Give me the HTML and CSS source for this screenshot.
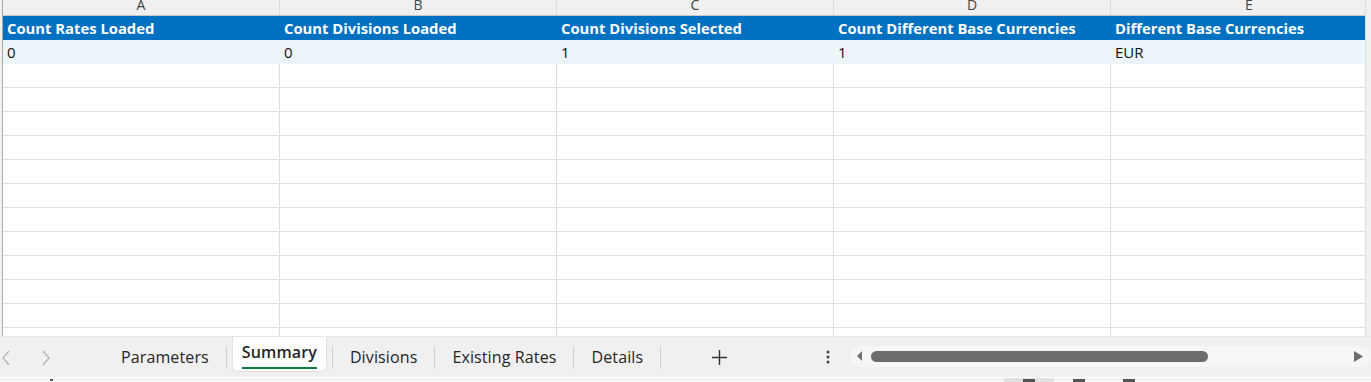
FILE: index.html
```html
<!DOCTYPE html>
<html lang="en">
  <head>
    <meta charset="UTF-8" />
    <title>Summary</title>
    <link rel="stylesheet" href="styles.css">
  </head>
  <body>
    <!-- Sheet area -->
    <div class="sheet">
      <div class="row-head"></div>
      <div class="grid">
        <div class="row letters">
          <div class="cell">A</div>
          <div class="cell">B</div>
          <div class="cell">C</div>
          <div class="cell">D</div>
          <div class="cell">E</div>
        </div>
        <div class="row title">
          <div class="cell">Count Rates Loaded</div>
          <div class="cell">Count Divisions Loaded</div>
          <div class="cell">Count Divisions Selected</div>
          <div class="cell">Count Different Base Currencies</div>
          <div class="cell">Different Base Currencies</div>
        </div>
        <div class="row data">
          <div class="cell">0</div>
          <div class="cell">0</div>
          <div class="cell">1</div>
          <div class="cell">1</div>
          <div class="cell">EUR</div>
        </div>
        <div class="empty-rows"></div>
      </div>
      <div class="vscroll"></div>
    </div>

    <!-- Sheet tabs -->
    <div class="tabbar">
      <div class="nav">
        <svg width="10" height="16" viewBox="0 0 10 16"><path d="M8 1 L2 8 L8 15" fill="none" stroke="#b4b4b4" stroke-width="1.3"/></svg>
        <svg width="10" height="16" viewBox="0 0 10 16"><path d="M2 1 L8 8 L2 15" fill="none" stroke="#b4b4b4" stroke-width="1.3"/></svg>
      </div>
      <div class="tabs">
        <div class="tab">Parameters</div>
        <div class="sep"></div>
        <div class="tab active"><span>Summary</span></div>
        <div class="sep"></div>
        <div class="tab">Divisions</div>
        <div class="sep"></div>
        <div class="tab">Existing Rates</div>
        <div class="sep"></div>
        <div class="tab">Details</div>
        <div class="sep"></div>
      </div>
      <div class="add">
        <svg width="15" height="15" viewBox="0 0 15 15"><path d="M7.5 0 V15 M0 7.5 H15" stroke="#333" stroke-width="1.4"/></svg>
      </div>
      <div class="more">
        <svg width="4" height="14" viewBox="0 0 4 14"><circle cx="2" cy="2" r="1.5" fill="#444"/><circle cx="2" cy="7" r="1.5" fill="#444"/><circle cx="2" cy="12" r="1.5" fill="#444"/></svg>
      </div>
      <div class="hscroll">
        <svg width="6" height="10" viewBox="0 0 6 10"><path d="M5 0 V10 L0 5 Z" fill="#707070"/></svg>
        <div class="track"><div class="thumb"></div></div>
        <svg width="9" height="11" viewBox="0 0 9 11"><path d="M0 0 V11 L9 5.5 Z" fill="#6d6d6d"/></svg>
      </div>
    </div>

    <!-- Status bar (cut off) -->
    <div class="status">
      <div class="caret"></div>
      <div class="views">
        <div class="view on"><i></i></div>
        <div class="view"><i></i></div>
        <div class="view"><i></i></div>
      </div>
    </div>
  </body>
</html>
```

FILE: styles.css
```css
/* Reset default styles */
* {
  margin: 0;
  padding: 0;
  box-sizing: border-box;
}

body {
  font-family: "Open Sans", "Noto Sans", sans-serif;
  width: 1371px;
  height: 382px;
  overflow: hidden;
  background: #f0f0f0;
}

/* Sheet */
.sheet {
  display: flex;
  height: 337px;
  background: #fff;
  border-bottom: 1px solid #e6e6e6;
}

.row-head {
  width: 3px;
  background: #f0f0f0;
  border-right: 1px solid #aaaaaa;
}

.grid {
  width: 1362px;
  overflow: hidden;
  background: #fff;
}

.row {
  display: grid;
  grid-template-columns: 277px 277px 277px 277px 277px;
}

.row .cell {
  height: 24px;
  padding-left: 4px;
  font-size: 15px;
  line-height: 24px;
  white-space: nowrap;
  overflow: hidden;
}

.letters {
  background: #f0f0f0;
  border-bottom: 1px solid #c6c6c6;
}

.letters .cell {
  height: 15px;
  line-height: 10px;
  padding-left: 0;
  text-align: center;
  color: #444;
  font-size: 14px;
  border-right: 1px solid #dadada;
}

.title {
  background: #0070c0;
}

.title .cell {
  color: #fff;
  font-weight: 700;
  font-size: 14.8px;
}

.data {
  background: #ecf5f9;
}

.data .cell {
  color: #111;
}

.empty-rows {
  height: 274px;
  background-image:
    linear-gradient(to bottom, transparent 23px, #dedede 23px),
    linear-gradient(to right, transparent 276px, #dedede 276px);
  background-size: 100% 24px, 277px 100%;
}

.vscroll {
  flex: 1;
  background: #f0f0f0;
  border-left: 1px solid #dedede;
}

/* Tab bar */
.tabbar {
  display: flex;
  align-items: center;
  height: 40px;
}

.tabbar > * {
  flex-shrink: 0;
}

.nav {
  display: flex;
  gap: 30px;
  padding-left: 1px;
  width: 104px;
  margin-top: 1px;
}

.tabs {
  display: flex;
  align-items: center;
  height: 100%;
}

.tab {
  padding: 0 17px;
  font-size: 16px;
  letter-spacing: 0.12px;
  white-space: nowrap;
  color: #262626;
  line-height: 36px;
}

.tab.active {
  align-self: flex-start;
  height: 35px;
  margin: 0 5px;
  padding: 0 9px;
  background: #fff;
  border: 1px solid #e2e2e2;
  border-top: none;
  border-radius: 0 0 6px 6px;
  font-weight: 600;
}

.tab.active span {
  display: block;
  line-height: 30px;
  border-bottom: 2px solid #107c41;
}

.sep {
  width: 1px;
  height: 23px;
  background: #cfcfcf;
}

.add {
  display: flex;
  width: 117px;
  justify-content: center;
}

.more {
  display: flex;
  width: 25px;
  margin-left: 48px;
}

.hscroll {
  display: flex;
  align-items: center;
  width: 520px;
  height: 21px;
  margin-top: -2px;
  padding: 0 8px 0 6px;
  background: #f6f6f6;
  border-radius: 10px;
}

.track {
  flex: 1;
  padding: 0 8px;
}

.thumb {
  width: 337px;
  height: 11px;
  border-radius: 6px;
  background: #6d6d6d;
}

/* Status bar */
.status {
  position: relative;
  height: 5px;
  background: #f4f4f4;
  border-top: 1px solid #fff;
}

.caret {
  position: absolute;
  left: 50px;
  top: 1px;
  width: 3px;
  height: 2px;
  background: #555;
}

.views {
  position: absolute;
  left: 1004px;
  top: 0;
  display: flex;
}

.view {
  width: 50px;
  height: 5px;
  display: flex;
  justify-content: center;
}

.view.on {
  background: #e0e0e0;
}

.view i {
  display: block;
  width: 12px;
  height: 3px;
  margin-top: 1px;
  background: #555;
}
```
